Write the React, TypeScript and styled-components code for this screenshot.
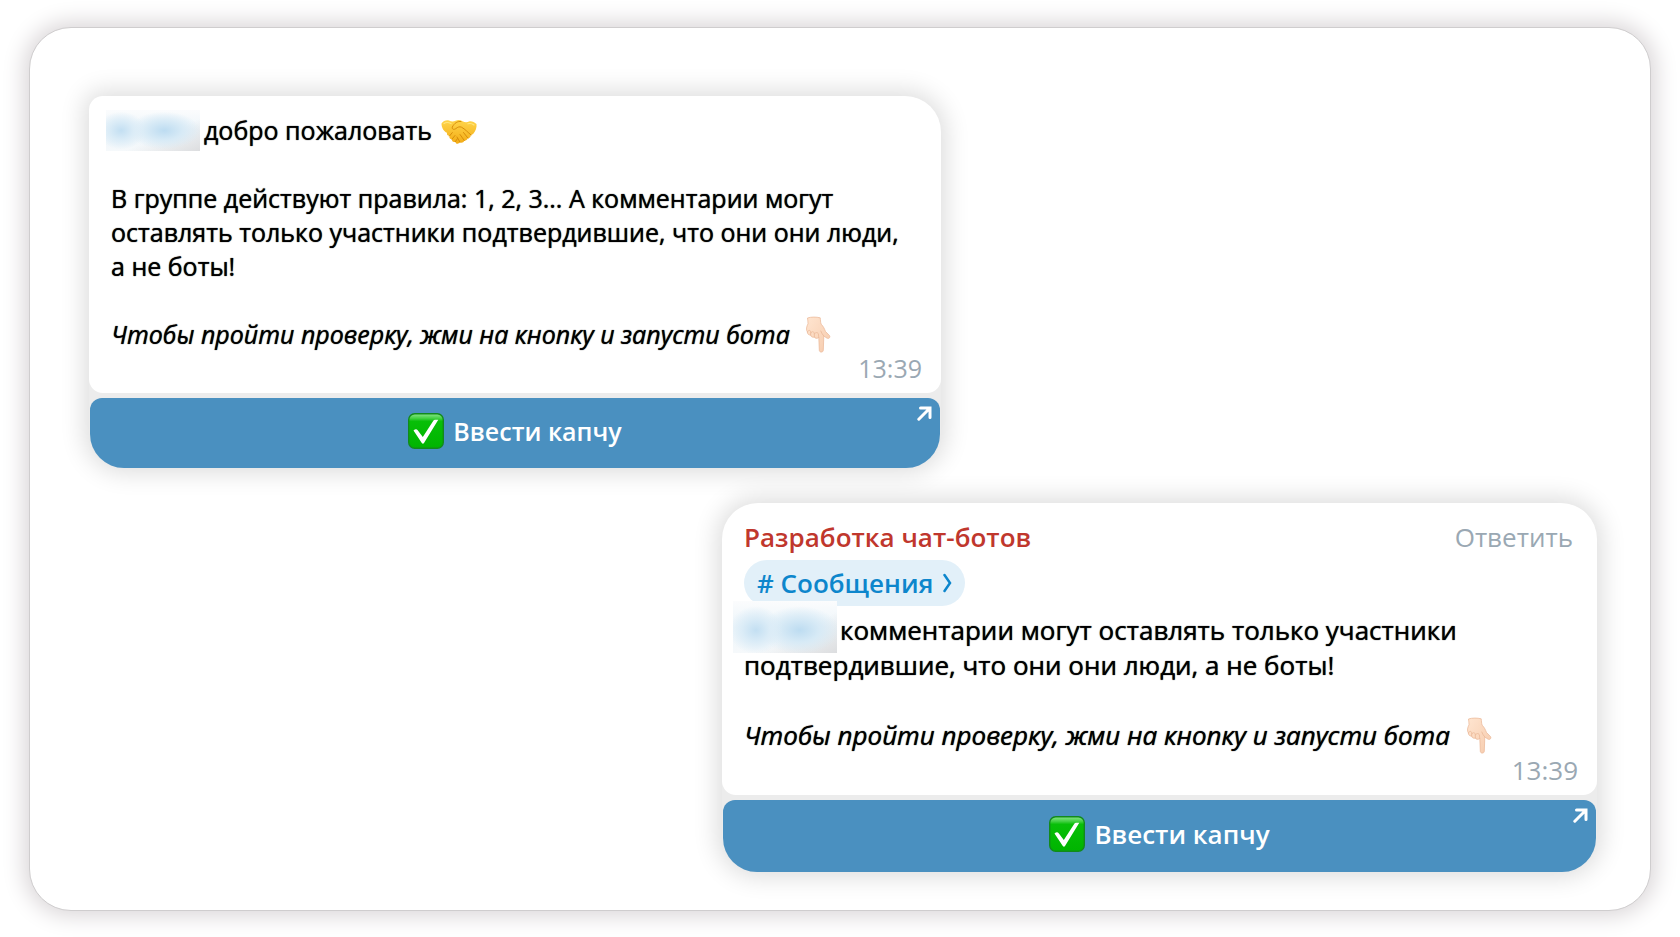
import React, { useId } from "react";
import styled, { createGlobalStyle } from "styled-components";

const GlobalStyle = createGlobalStyle`
  * { box-sizing: border-box; }
  body {
    margin: 0;
    background: #ffffff;
    font-family: "Open Sans", "Noto Sans", sans-serif;
  }
`;

const Page = styled.div`
  display: flex;
  min-height: 100vh;
  padding: 27px 29px 26px;
`;

const Frame = styled.main`
  flex: 1;
  display: flex;
  flex-direction: column;
  gap: 35px;
  padding: 68px 53px 38px 59px;
  background: #ffffff;
  border: 1px solid #cfcdce;
  border-radius: 42px;
  box-shadow: 0 0 22px 5px #dad6d8;
`;

const Message = styled.article<{ $side: "start" | "end"; $width: number; $size: number; $line: number }>`
  display: flex;
  flex-direction: column;
  gap: 5px;
  align-self: flex-${(p) => p.$side};
  width: 100%;
  max-width: ${(p) => p.$width}px;
  font-size: ${(p) => p.$size}px;
  line-height: ${(p) => p.$line}px;
  color: #000000;
  background: #ececec;
  border-radius: ${(p) => (p.$side === "start" ? "14px 36px 36px 36px" : "36px")};
  box-shadow: 0 0 24px 5px #dddddd;
`;

const Bubble = styled.div<{ $radius: string; $bottom: number }>`
  padding: 17px 19px ${(p) => p.$bottom}px 22px;
  background: #ffffff;
  border-radius: ${(p) => p.$radius};
`;

const Header = styled.header`
  display: flex;
  justify-content: space-between;
`;

const Author = styled.span`
  font-weight: 600;
  color: #c0372d;
`;

const Reply = styled.button`
  padding: 0 5px 0 0;
  border: 0;
  background: none;
  font: inherit;
  color: #9aa8b3;
`;

const Topic = styled.a`
  display: inline-flex;
  align-items: center;
  gap: 10px;
  height: 46px;
  margin: 5px 0 7px;
  padding: 0 13px;
  border-radius: 23px;
  background: #e2f0f9;
  font-weight: 600;
  color: #0d86cc;
  text-decoration: none;
  vertical-align: top;
`;

const Text = styled.p`
  margin: 0 0 1lh;
  text-shadow: 0 0 1px #000000;
`;

const Note = styled.p`
  margin: 0;
  font-style: italic;
  text-shadow: 0 0 1px #000000;
`;

const HiddenName = styled.span<{ $width: number }>`
  position: relative;
  display: inline-block;
  width: ${(p) => p.$width}px;
  height: 1lh;
  vertical-align: top;
`;

const Haze = styled.span<{ $large?: boolean }>`
  position: absolute;
  inset: ${(p) => (p.$large ? "-12px 3px -5px -11px" : "-3px 4px -4px -5px")};
  background:
    radial-gradient(ellipse 26% 46% at ${(p) => (p.$large ? "22% 56%" : "16% 50%")}, #c3dff2, #dbecf7 50%, transparent),
    radial-gradient(ellipse 38% 46% at ${(p) => (p.$large ? "64% 56%" : "62% 50%")}, #bddcf1, #d7eaf6 50%, transparent),
    linear-gradient(to bottom right, transparent 60%, #dcdddf),
    linear-gradient(to bottom, #fbfcfd, #edf5fa 50%, #f6f9fb);
`;

const Time = styled.time`
  display: block;
  text-align: right;
  color: #9aa8b3;
`;

const Action = styled.button<{ $height: number }>`
  position: relative;
  display: flex;
  align-items: center;
  justify-content: center;
  gap: 9px;
  height: ${(p) => p.$height}px;
  margin: 0 1px;
  padding: 0 0 4px;
  border: 0;
  border-radius: 12px 12px 34px 34px;
  background: #4a90c0;
  font: inherit;
  font-weight: 600;
  color: #ffffff;
`;

const Corner = styled.svg`
  position: absolute;
  top: 8px;
  right: 8px;
`;

const InlineIcon = styled.svg`
  display: inline-block;
  overflow: visible;
  vertical-align: top;
`;

function Handshake() {
  const id = useId();
  return (
    <InlineIcon width="40" height="34" viewBox="0 0 40 34" role="img" aria-label="рукопожатие">
      <defs>
        <linearGradient id={id} x1="0" y1="0" x2="0" y2="1">
          <stop offset="0" stopColor="#ffd54a" />
          <stop offset="1" stopColor="#f3ac16" />
        </linearGradient>
      </defs>
      <path
        d="M2.500 10.500 C4.500 8 7 6.800 10 7.500 C12 8.500 14 9 16.500 7.800 C19 6.600 21 6.800 23.500 8.200 C26 9.600 28 9.600 30 8.500 C32 7.600 35.500 9 37.500 11 C38 14.500 36.500 18 34.500 20.500 C33.500 21.600 32.500 21.800 31.800 22.200 C31.800 24 30.500 25.200 28.800 25.300 C28.200 27 27 27.800 25.400 27.700 C24.600 29.400 22.500 30.200 21 29.300 C19.500 31.500 16.500 31 16.300 28.700 C14.300 29.700 12.600 28 13 26.200 C10.800 26.200 10 24.800 10.500 23 C8.400 22.800 7.600 21.500 8 19.800 C4.600 18.500 2.500 14.500 2.500 10.500Z"
        fill={`url(#${id})`}
      />
      <path
        d="M22 8.500 C18.500 8 15.500 10 13.300 14 C12.800 16.500 15 17 17 15.500 C18.500 14.200 20.500 13.300 22.500 14.200 C26 16 29 19.500 32 22 M24.500 19.500 L29 25.200 M21 21.500 L25.300 27.500 M18 24 L21 29.200 M10.500 23 L13.300 19.600 M13 26.200 L16 22.500 M16.300 28.700 L18.500 25.500"
        fill="none"
        stroke="#d88e0b"
        strokeWidth="1"
        strokeLinecap="round"
      />
      <path d="M5 10.500 Q8 8.500 12 10.500 M29 10.800 Q32 9.800 35 12" fill="none" stroke="#ffe680" strokeWidth="1.200" strokeLinecap="round" />
    </InlineIcon>
  );
}

function PointDown() {
  const id = useId();
  return (
    <InlineIcon width="40" height="34" viewBox="0 0 40 34" role="img" aria-label="палец вниз">
      <defs>
        <linearGradient id={id} x1="0" y1="0" x2="1" y2="1">
          <stop offset="0" stopColor="#ffe5d0" />
          <stop offset="1" stopColor="#f6cbad" />
        </linearGradient>
      </defs>
      <path
        d="M11.500 1 C15 -0.200 20.500 -0.200 24.200 0.800 C24.600 3 24.300 5 25.200 7.200 C27.500 9.500 28.500 12 29.500 14.500 L33.500 18.600 C34.600 20 33.200 22 31.400 21.300 C29.600 20.600 28.800 19.500 27.800 19 L27.300 33.300 C27.200 35.700 23.400 35.700 23.300 33.300 L22.800 20.500 C20.800 22 18.800 21.300 18.400 20 C16.400 20.800 14.800 19.600 14.700 18 C12.600 18.300 11.400 16.800 11.400 15 C9.800 12.500 10.600 9.500 12 6.800 C12.300 4.800 11.500 3 11.500 1Z"
        fill={`url(#${id})`}
        stroke="#e9b493"
        strokeWidth="0.700"
      />
      <path
        d="M11.500 15 C12 12.800 14.500 12.800 14.800 15 L14.700 18 M14.800 16 C15.500 14 18 14.200 18.300 16.500 L18.400 20 M18.400 17 C19 15 21.800 15 22.400 17 L22.800 20.500 M27.800 19 C26.500 17.500 25.500 16 24.800 14"
        fill="none"
        stroke="#e8b494"
        strokeWidth="0.700"
        strokeLinecap="round"
      />
    </InlineIcon>
  );
}

function CheckBox() {
  const id = useId();
  return (
    <svg width="36" height="36" viewBox="0 0 36 36" aria-hidden="true">
      <defs>
        <linearGradient id={id} x1="0" y1="0" x2="0" y2="1">
          <stop offset="0" stopColor="#8be68b" />
          <stop offset="0.140" stopColor="#3fcf3f" />
          <stop offset="0.220" stopColor="#08bf08" />
          <stop offset="1" stopColor="#00b400" />
        </linearGradient>
      </defs>
      <rect x="0.700" y="0.700" width="34.600" height="34.600" rx="6" fill={`url(#${id})`} stroke="#128a1c" strokeWidth="1.400" />
      <path d="M5.500 17.500 Q8 15.400 9.500 17 L14.800 24 L25.500 7.500 Q26 6.700 27 6.700 L30.300 6.700 L16 30 Q15 31.600 13.800 30Z" fill="#fff" />
    </svg>
  );
}

function CaptchaButton({ height }: { height: number }) {
  return (
    <Action type="button" $height={height}>
      <CheckBox />
      Ввести капчу
      <Corner width="15" height="15" viewBox="0 0 15 15" aria-hidden="true">
        <path d="M1.800 13.200 L12.500 2.500 M3.500 2 H13 V11.500" fill="none" stroke="#fff" strokeWidth="3" strokeLinecap="round" />
      </Corner>
    </Action>
  );
}

export default function App() {
  return (
    <>
      <GlobalStyle />
      <Page>
        <Frame>
          <Message $side="start" $width={852} $size={25} $line={34}>
            <Bubble $radius="14px 36px 14px 14px" $bottom={8}>
              <Text>
                <HiddenName $width={93}><Haze /></HiddenName>
                добро пожаловать <Handshake />
              </Text>
              <Text>
                В группе действуют правила: 1, 2, 3... А комментарии могут
                оставлять только участники подтвердившие, что они они люди,
                <br />
                а не боты!
              </Text>
              <Note>
                Чтобы пройти проверку, жми на кнопку и запусти бота <PointDown />
              </Note>
              <Time dateTime="13:39">13:39</Time>
            </Bubble>
            <CaptchaButton height={70} />
          </Message>
          <Message $side="end" $width={875} $size={26} $line={35}>
            <Bubble $radius="36px 36px 14px 14px" $bottom={7}>
              <Header>
                <Author>Разработка чат-ботов</Author>
                <Reply type="button">Ответить</Reply>
              </Header>
              <Topic href="#messages">
                # Сообщения
                <svg width="9" height="20" viewBox="0 0 9 20" aria-hidden="true">
                  <path d="M1.500 2 L7 10 L1.500 18" fill="none" stroke="#0d86cc" strokeWidth="2.500" strokeLinecap="round" />
                </svg>
              </Topic>
              <Text>
                <HiddenName $width={96}><Haze $large /></HiddenName>
                комментарии могут оставлять только участники
                подтвердившие, что они они люди, а не боты!
              </Text>
              <Note>
                Чтобы пройти проверку, жми на кнопку и запусти бота <PointDown />
              </Note>
              <Time dateTime="13:39">13:39</Time>
            </Bubble>
            <CaptchaButton height={72} />
          </Message>
        </Frame>
      </Page>
    </>
  );
}
